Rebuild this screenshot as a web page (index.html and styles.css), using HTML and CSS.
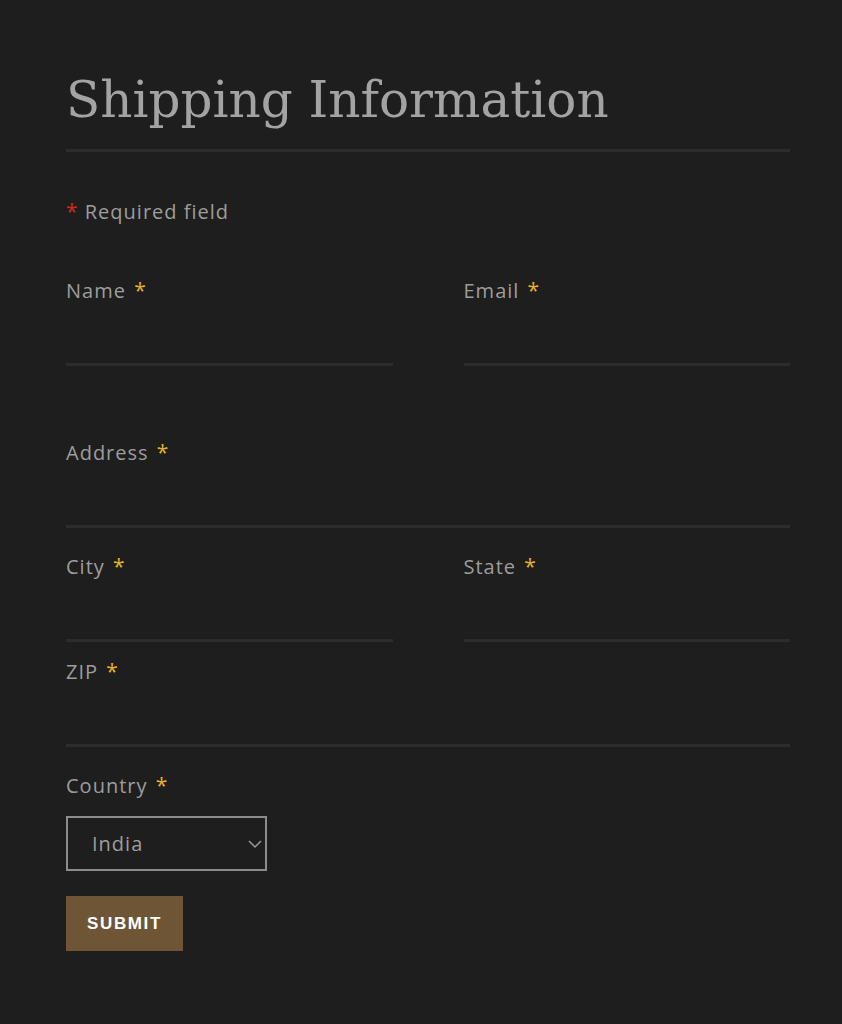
FILE: index.html
```html
<!DOCTYPE html>
<html lang="en">
<head>
    <meta charset="UTF-8">
    <meta name="viewport" content="width=device-width, initial-scale=1.0">
    <title>Shipping Information</title>
    <link rel="stylesheet" href="styles.css">
</head>
<body>
    <div class="container">
        <h1>Shipping Information</h1>
        <p class="note"><span class="req-mark">*</span> Required field</p>

        <form class="shipping-form">
            <div class="row row-first">
                <div class="field">
                    <label for="name">Name <span class="star">*</span></label>
                    <input type="text" id="name">
                </div>
                <div class="field">
                    <label for="email">Email <span class="star">*</span></label>
                    <input type="email" id="email">
                </div>
            </div>

            <div class="row row-address">
                <div class="field">
                    <label for="address">Address <span class="star">*</span></label>
                    <input type="text" id="address">
                </div>
            </div>

            <div class="row">
                <div class="field">
                    <label for="city">City <span class="star">*</span></label>
                    <input type="text" id="city">
                </div>
                <div class="field">
                    <label for="state">State <span class="star">*</span></label>
                    <input type="text" id="state">
                </div>
            </div>

            <div class="row row-zip">
                <div class="field">
                    <label for="zip">ZIP <span class="star">*</span></label>
                    <input type="text" id="zip">
                </div>
            </div>

            <div class="row">
                <div class="field">
                    <label for="country">Country <span class="star">*</span></label>
                    <div class="select-wrap">
                        <select id="country">
                            <option>India</option>
                            <option>United States</option>
                            <option>United Kingdom</option>
                        </select>
                        <svg class="chevron" width="16" height="10" viewBox="0 0 16 10">
                            <path d="M2 2 L8 8 L14 2" fill="none" stroke="#9a9a9a" stroke-width="1.5"/>
                        </svg>
                    </div>
                </div>
            </div>

            <button type="submit" class="submit">Submit</button>
        </form>
    </div>
</body>
</html>
```

FILE: styles.css
```css
body {
    margin: 0;
    padding: 0;
    background-color: #1e1e1e;
    font-family: "Open Sans", Arial, sans-serif;
    color: #9d9d9d;
}
.container {
    padding: 65px 52px 40px 66px;
}
h1 {
    margin: 0;
    padding-bottom: 14px;
    font-family: "DejaVu Serif", "Liberation Serif", serif;
    font-weight: normal;
    font-size: 50px;
    line-height: 70px;
    color: #a3a3a3;
    border-bottom: 3px solid #2c2c2c;
}
.note {
    margin: 45px 0 0;
    height: 30px;
    font-size: 20px;
    line-height: 30px;
    letter-spacing: 1px;
}
.req-mark {
    color: #d12a1f;
    font-size: 21px;
    line-height: 1;
}
.star {
    color: #e3b22f;
    font-size: 21px;
    line-height: 1;
    margin-left: 2px;
}
.shipping-form {
    margin: 0;
}
.row {
    display: grid;
    grid-template-columns: 1fr 1fr;
    column-gap: 71px;
    margin-top: 24px;
}
.row-first {
    margin-top: 49px;
}
.row-address {
    margin-top: 72px;
}
.row-address .field,
.row-zip .field {
    grid-column: 1 / 3;
}
.row-zip {
    margin-top: 15px;
}
.field label {
    display: block;
    height: 30px;
    font-size: 20px;
    line-height: 30px;
    letter-spacing: 1px;
}
.field input {
    display: block;
    width: 100%;
    box-sizing: border-box;
    height: 60px;
    border: none;
    border-bottom: 3px solid #2c2c2c;
    background: transparent;
    color: #bbb;
    font-family: inherit;
    font-size: 18px;
    outline: none;
}
.select-wrap {
    position: relative;
    width: 201px;
    margin-top: 15px;
}
.select-wrap select {
    -webkit-appearance: none;
    appearance: none;
    display: block;
    width: 201px;
    height: 55px;
    box-sizing: border-box;
    padding: 0 0 0 24px;
    border: 2px solid #8c8c8c;
    border-radius: 0;
    background: transparent;
    color: #9d9d9d;
    font-family: inherit;
    font-size: 20px;
    letter-spacing: 1px;
}
.chevron {
    position: absolute;
    right: 4px;
    top: 23px;
    pointer-events: none;
}
.submit {
    display: block;
    margin-top: 25px;
    width: 117px;
    height: 55px;
    border: none;
    background-color: #6e5535;
    color: #fff;
    font-family: "Liberation Sans", Arial, sans-serif;
    font-weight: bold;
    font-size: 17px;
    letter-spacing: 1.6px;
    text-transform: uppercase;
}
```
